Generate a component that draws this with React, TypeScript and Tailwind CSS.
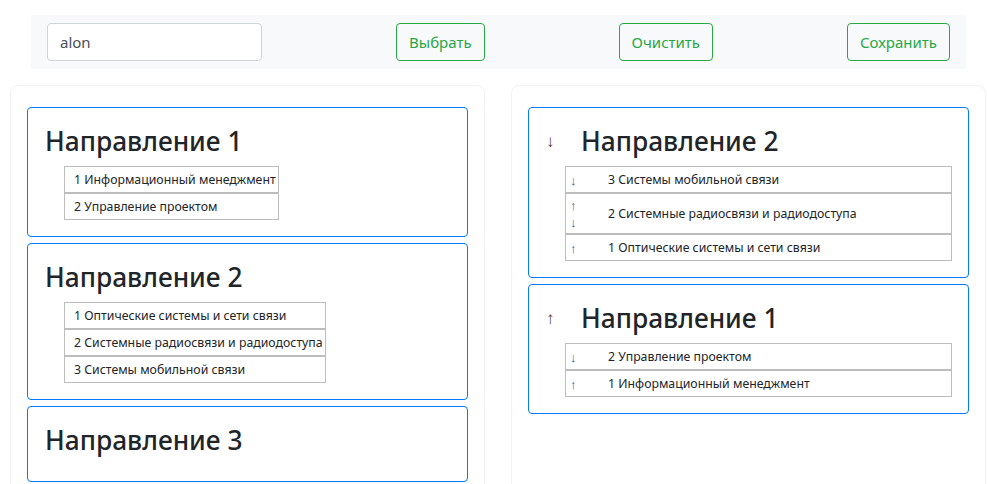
import React from 'react';

const font = { fontFamily: '"Noto Sans", "Open Sans", sans-serif' };

const leftGroups = [
  { title: 'Направление 1', items: ['1 Информационный менеджмент', '2 Управление проектом'] },
  {
    title: 'Направление 2',
    items: ['1 Оптические системы и сети связи', '2 Системные радиосвязи и радиодоступа', '3 Системы мобильной связи'],
  },
  { title: 'Направление 3', items: [] as string[] },
];

type RightItem = { text: string; up: boolean; down: boolean };

const rightGroups: { title: string; arrow: string; items: RightItem[] }[] = [
  {
    title: 'Направление 2',
    arrow: '↓',
    items: [
      { text: '3 Системы мобильной связи', up: false, down: true },
      { text: '2 Системные радиосвязи и радиодоступа', up: true, down: true },
      { text: '1 Оптические системы и сети связи', up: true, down: false },
    ],
  },
  {
    title: 'Направление 1',
    arrow: '↑',
    items: [
      { text: '2 Управление проектом', up: false, down: true },
      { text: '1 Информационный менеджмент', up: true, down: false },
    ],
  },
];

function OutlineButton({ label }: { label: string }) {
  return (
    <button className="h-[38px] px-3 rounded border border-[#28a745] text-[#28a745] text-[15px] bg-transparent">
      {label}
    </button>
  );
}

export default function App() {
  return (
    <div className="min-h-screen bg-white text-[#212529]" style={font}>
      {/* Toolbar */}
      <div className="pt-[15px] pl-[31px] pr-[21px]">
        <div className="flex items-center justify-between bg-[#f8f9fa] px-4 py-2">
          <input
            className="w-[215px] h-[38px] px-3 rounded border border-[#ced4da] bg-white text-[15px] text-[#495057] outline-none"
            defaultValue="alon"
          />
          <OutlineButton label="Выбрать" />
          <OutlineButton label="Очистить" />
          <OutlineButton label="Сохранить" />
        </div>
      </div>

      {/* Columns */}
      <div className="grid grid-cols-[475px_475px] gap-[26px] pl-[10px] pt-4">
        {/* Source */}
        <div className="border border-[#f2f2f2] rounded-lg px-4 pt-[21px] pb-4 flex flex-col gap-[6px] h-[420px] overflow-hidden">
          {leftGroups.map((g) => (
            <div key={g.title} className="border border-[#007bff] rounded px-[17px] pt-4 pb-4">
              <h3 className="text-[26.3px] leading-[34px] font-medium mb-2">{g.title}</h3>
              {g.items.length > 0 && (
                <ul className="ml-[19px] w-fit">
                  {g.items.map((it) => (
                    <li
                      key={it}
                      className="border border-[#bdbdbd] pl-[9px] pr-[2px] py-[3px] text-[12.3px] leading-[19px] whitespace-nowrap"
                    >
                      {it}
                    </li>
                  ))}
                </ul>
              )}
            </div>
          ))}
        </div>

        {/* Result */}
        <div className="border border-[#f2f2f2] rounded-lg px-4 pt-[21px] pb-4 flex flex-col gap-[6px] h-[420px] overflow-hidden">
          {rightGroups.map((g) => (
            <div key={g.title} className="border border-[#007bff] rounded px-4 pt-4 pb-4">
              <div className="flex items-center mb-2">
                <span className="w-[36px] pl-[1px] text-[17px] text-[#5a4030]">{g.arrow}</span>
                <h3 className="text-[26.3px] leading-[34px] font-medium">{g.title}</h3>
              </div>
              <ul className="ml-5">
                {g.items.map((it) => (
                  <li
                    key={it.text}
                    className="flex items-center border border-[#bdbdbd] pl-[4px] py-[3px] text-[12.3px] leading-[19px]"
                  >
                    <span className="w-[38px] flex flex-col gap-[1px] text-[#2f5f95] text-[13px] leading-[16px]">
                      {it.up && <span>↑</span>}
                      {it.down && <span>↓</span>}
                    </span>
                    <span>{it.text}</span>
                  </li>
                ))}
              </ul>
            </div>
          ))}
        </div>
      </div>
    </div>
  );
}
